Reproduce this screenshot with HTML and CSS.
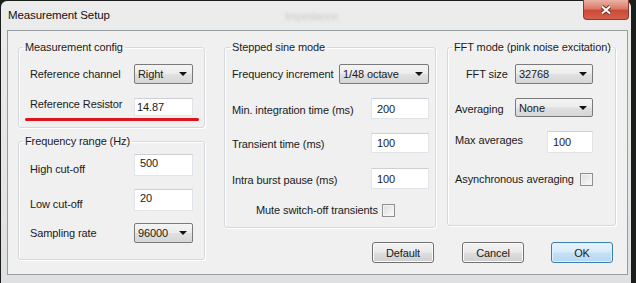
FILE: index.html
```html
<!DOCTYPE html>
<html lang="en">
<head>
  <meta charset="UTF-8">
  <title>Measurement Setup</title>
  <link rel="stylesheet" href="styles.css">
</head>
<body>

<div class="window">
  <div class="titlebar">
    <span class="title">Measurement Setup</span>
    <span class="ghost">Impedance</span>
    <button class="close" type="button">
      <svg width="12" height="10" viewBox="0 0 12 10">
        <path d="M2 1.5 L10 8.5 M10 1.5 L2 8.5" stroke="#6a2b22" stroke-width="4"/>
        <path d="M2 1.5 L10 8.5 M10 1.5 L2 8.5" stroke="#fff" stroke-width="2.2"/>
      </svg>
    </button>
  </div>

  <div class="client">
    <div class="col col-left">
      <fieldset class="group g-config">
        <legend>Measurement config</legend>
        <div class="row mt10 h20">
          <label>Reference channel</label>
          <div class="combo w59"><span>Right</span><i class="arrow"></i></div>
        </div>
        <div class="row mt13 h19">
          <label class="up4">Reference Resistor</label>
          <input class="edit w59 h18 pl2" type="text" value="14.87">
        </div>
        <div class="marker"></div>
      </fieldset>

      <fieldset class="group g-range">
        <legend>Frequency range (Hz)</legend>
        <div class="row bottom mt6 h22">
          <label>High cut-off</label>
          <input class="edit w59 h22 top" type="text" value="500">
        </div>
        <div class="row bottom mt13 h22">
          <label>Low cut-off</label>
          <input class="edit w59 h22 top" type="text" value="20">
        </div>
        <div class="row mt12 h20">
          <label>Sampling rate</label>
          <div class="combo w59"><span>96000</span><i class="arrow"></i></div>
        </div>
      </fieldset>
    </div>

    <div class="col col-mid">
      <fieldset class="group g-sine">
        <legend>Stepped sine mode</legend>
        <div class="row mt10 h20">
          <label>Frequency increment</label>
          <div class="combo w90"><span>1/48 octave</span><i class="arrow"></i></div>
        </div>
        <div class="row mt14 h21">
          <label class="down3">Min. integration time (ms)</label>
          <input class="edit w58 h21" type="text" value="200">
        </div>
        <div class="row mt14 h20">
          <label class="down3">Transient time (ms)</label>
          <input class="edit w58 h20" type="text" value="100">
        </div>
        <div class="row mt15 h21">
          <label class="down4">Intra burst pause (ms)</label>
          <input class="edit w58 h21" type="text" value="100">
        </div>
        <div class="row check-row mute mt15 h13">
          <label>Mute switch-off transients</label>
          <span class="check"></span>
        </div>
      </fieldset>
      <div class="buttons buttons-mid">
        <button class="btn" type="button">Default</button>
      </div>
    </div>

    <div class="col col-right">
      <fieldset class="group g-fft">
        <legend>FFT mode (pink noise excitation)</legend>
        <div class="row mt10 h20">
          <label class="indent">FFT size</label>
          <div class="combo w78"><span>32768</span><i class="arrow"></i></div>
        </div>
        <div class="row mt14 h19">
          <label class="down3">Averaging</label>
          <div class="combo w78"><span>None</span><i class="arrow"></i></div>
        </div>
        <div class="row mt14 h22">
          <label class="up4">Max averages</label>
          <input class="edit w46 h22" type="text" value="100">
        </div>
        <div class="row mt20 h13">
          <label>Asynchronous averaging</label>
          <span class="check"></span>
        </div>
      </fieldset>
      <div class="buttons buttons-right">
        <button class="btn" type="button">Cancel</button>
        <button class="btn btn-ok" type="button">OK</button>
      </div>
    </div>
  </div>
</div>

</body>
</html>
```

FILE: styles.css
```css
body {
  margin: 0;
  background-color: #1b1e1b;
  font-family: "Liberation Sans", Arial, sans-serif;
  font-size: 11px;
  letter-spacing: -0.1px;
  color: #1a1a1a;
  overflow: hidden;
}

.window {
  margin: 1px 0 0 1px;
  width: 630px;
  height: 290px;
  box-sizing: border-box;
  padding: 0 3px 0 6px;
  background: linear-gradient(#ececec, #dfe0e1);
  border-radius: 6px 6px 0 0;
}

.titlebar {
  height: 29px;
  display: flex;
  align-items: flex-start;
}

.title {
  margin: 8px 0 0 1px;
  line-height: 13px;
  font-size: 11.5px;
  color: #111;
}

.ghost {
  margin: 9px 0 0 175px;
  line-height: 13px;
  color: #8c8c8c;
  opacity: 0.35;
  filter: blur(1.4px);
}

.close {
  margin: -1px -1px 0 auto;
  width: 46px;
  height: 20px;
  padding: 0;
  border: 1px solid #8d3a2e;
  border-top: none;
  border-radius: 0 0 4px 4px;
  background: linear-gradient(#eab2a6 0%, #dc7a69 45%, #cc4a36 55%, #d5604a 100%);
  display: flex;
  align-items: center;
  justify-content: center;
}

.client {
  height: 245px;
  box-sizing: border-box;
  border: 1px solid #979ca1;
  background-color: #f0f0f0;
  padding: 10px 0 0 10px;
  display: flex;
  align-items: flex-start;
}

.col {
  display: flex;
  flex-direction: column;
}

.col-left { width: 187px; }
.col-mid { width: 212px; margin-left: 19px; }
.col-right { width: 169px; margin-left: 11px; }

/* group boxes */
.group {
  margin: 0;
  min-width: 0;
  box-sizing: border-box;
  border: 1px solid #d5d9dd;
  border-radius: 3px;
  box-shadow: inset 1px 1px 0 #fff, 1px 1px 0 #fff;
}

.group legend {
  padding: 0 2px;
  line-height: 13px;
  white-space: nowrap;
}

.g-config { height: 87px; padding: 0 11px; }
.g-config legend { margin-left: -7px; }

.g-range { height: 125px; margin-top: 7px; padding: 0 11px; }
.g-range legend { margin-left: -7px; }

.g-sine { height: 187px; padding: 0 6px 0 7px; }
.g-sine legend { margin-left: -2px; }

.g-fft { height: 185px; padding: 0 22px 0 7px; }
.g-fft legend { margin-left: -3px; }

.row {
  display: flex;
  align-items: center;
  justify-content: space-between;
}

.row.bottom { align-items: flex-end; }

.row label { line-height: 13px; white-space: nowrap; }

.mt6 { margin-top: 6px; }
.mt10 { margin-top: 10px; }
.mt12 { margin-top: 12px; }
.mt13 { margin-top: 13px; }
.mt14 { margin-top: 14px; }
.mt15 { margin-top: 15px; }
.mt20 { margin-top: 20px; }

.h13 { height: 13px; }
.h18 { height: 18px; }
.h19 { height: 19px; }
.h20 { height: 20px; }
.h21 { height: 21px; }
.h22 { height: 22px; }

.w46 { width: 46px; }
.w58 { width: 58px; }
.w59 { width: 59px; }
.w78 { width: 78px; }
.w90 { width: 90px; }

.up4 { padding-bottom: 4px; }
.down3 { padding-top: 3px; }
.down4 { padding-top: 4px; }
.indent { margin-left: 11px; }

.mute {
  justify-content: flex-start;
  gap: 4px;
  padding-left: 24px;
}

/* controls */
.combo {
  height: 20px;
  box-sizing: border-box;
  border: 1px solid #7a7a7a;
  border-radius: 2px;
  background: linear-gradient(#f4f4f4 0%, #ececec 48%, #e0e0e0 52%, #d6d6d6 100%);
  display: flex;
  align-items: center;
  justify-content: space-between;
  padding: 0 5px 0 3px;
}

.row.h19 .combo { height: 19px; }

.arrow {
  width: 0;
  height: 0;
  border-left: 4px solid transparent;
  border-right: 4px solid transparent;
  border-top: 4px solid #111;
}

.edit {
  box-sizing: border-box;
  margin: 0;
  padding: 0 0 0 5px;
  border: 1px solid #e1e4e8;
  border-top-color: #cdd0d4;
  background-color: #fff;
  font: inherit;
  letter-spacing: inherit;
  color: inherit;
  outline: none;
}

.edit.pl2 { padding-left: 2px; }
.edit.top { padding-bottom: 5px; }

.check {
  width: 13px;
  height: 13px;
  box-sizing: border-box;
  border: 1px solid #8e8f8f;
  background: linear-gradient(135deg, #dcdcdc, #fbfbfb);
  box-shadow: inset 0 0 0 1px #f4f4f4;
}

.marker {
  margin: 2px -6px 0 -5px;
  height: 3px;
  border-radius: 2px;
  background-color: #e0141c;
}

/* buttons */
.buttons {
  display: flex;
}

.buttons-mid {
  margin-top: 14px;
  justify-content: flex-end;
  padding-right: 2px;
}

.buttons-right {
  margin-top: 16px;
  justify-content: space-between;
  padding: 0 3px 0 15px;
}

.btn {
  width: 62px;
  height: 21px;
  box-sizing: border-box;
  padding: 0;
  border: 1px solid #707070;
  border-radius: 3px;
  background: linear-gradient(#f2f2f2 0%, #ebebeb 45%, #dddddd 55%, #cfcfcf 100%);
  box-shadow: inset 0 0 0 1px #fbfbfb;
  font: inherit;
  letter-spacing: inherit;
  color: inherit;
}

.btn-ok {
  border-color: #3c7fb1;
  background: linear-gradient(#e8f3fc 0%, #d8ebfa 45%, #c4e0f6 55%, #b6d7f1 100%);
  box-shadow: inset 0 0 0 1px #dff0fc;
}
```
